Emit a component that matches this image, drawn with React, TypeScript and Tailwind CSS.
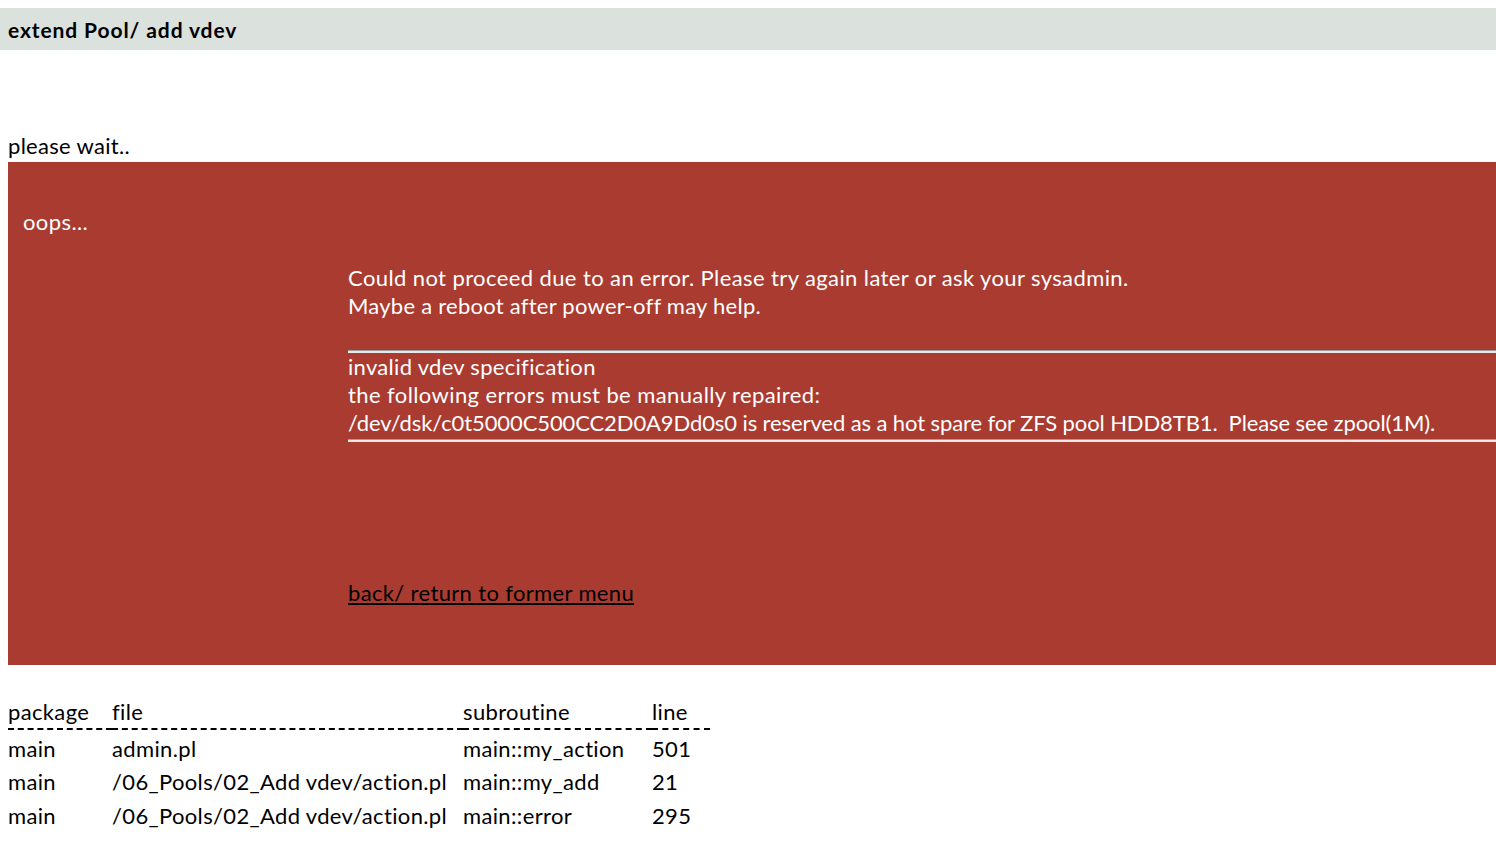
export default function App() {
  const rows = [
    { pkg: "main", file: "admin.pl", sub: "main::my_action", line: "501" },
    { pkg: "main", file: "/06_Pools/02_Add vdev/action.pl", sub: "main::my_add", line: "21" },
    { pkg: "main", file: "/06_Pools/02_Add vdev/action.pl", sub: "main::error", line: "295" },
  ]

  return (
    <div className="min-h-screen bg-white pt-2 text-black font-['Lato',sans-serif]">
      <div className="h-[42px] bg-[#dbe1dc] flex items-center px-2 pt-[1px] text-[21px] font-bold tracking-[0.9px]">
        extend Pool/ add vdev
      </div>

      <div className="mt-[82px] mb-[2px] px-2 text-[22px] leading-[28px] tracking-[0.3px]">please wait..</div>

      <div className="ml-2 h-[503px] bg-[#aa3b31] px-[15px] pt-[46px] text-white text-[22px] leading-[28px]">
        <div className="tracking-[0.4px]">oops...</div>

        <div className="ml-[325px] mt-[28px]">
          <div className="tracking-[0.4px]">Could not proceed due to an error. Please try again later or ask your sysadmin.</div>
          <div className="tracking-[0.25px]">Maybe a reboot after power-off may help.</div>

          <div className="mt-[30px] -mr-[15px]">
            <div className="border-t border-[#9e9e9e] h-[3px] bg-[#e9e9e9]"></div>
            <div className="tracking-[0.3px]">invalid vdev specification</div>
            <div className="tracking-[0.4px]">the following errors must be manually repaired:</div>
            <div className="tracking-[-0.1px]">/dev/dsk/c0t5000C500CC2D0A9Dd0s0 is reserved as a hot spare for ZFS pool HDD8TB1.&nbsp; Please see zpool(1M).</div>
            <div className="mt-[2px] border-t border-[#9e9e9e] h-[3px] bg-[#e9e9e9]"></div>
          </div>

          <a href="#" className="block w-max mt-[137px] text-black underline underline-offset-2 tracking-[0.35px]">
            back/ return to former menu
          </a>
        </div>
      </div>

      <table className="mt-[33px] ml-2 text-[22px] leading-[28px] border-collapse table-fixed w-[702px] tracking-[0.35px]">
        <thead>
          <tr className="border-b-2 border-dashed border-black">
            <th className="w-[104px] font-normal text-left pb-[2px]">package</th>
            <th className="w-[351px] font-normal text-left pb-[2px]">file</th>
            <th className="w-[189px] font-normal text-left pb-[2px]">subroutine</th>
            <th className="w-[58px] font-normal text-left pb-[2px]">line</th>
          </tr>
        </thead>
        <tbody>
          {rows.map((r, i) => (
            <tr key={i} className="h-[34px]">
              <td className="pt-[4px] whitespace-nowrap">{r.pkg}</td>
              <td className="pt-[4px] whitespace-nowrap">{r.file}</td>
              <td className="pt-[4px] whitespace-nowrap">{r.sub}</td>
              <td className="pt-[4px] whitespace-nowrap">{r.line}</td>
            </tr>
          ))}
        </tbody>
      </table>
    </div>
  )
}
